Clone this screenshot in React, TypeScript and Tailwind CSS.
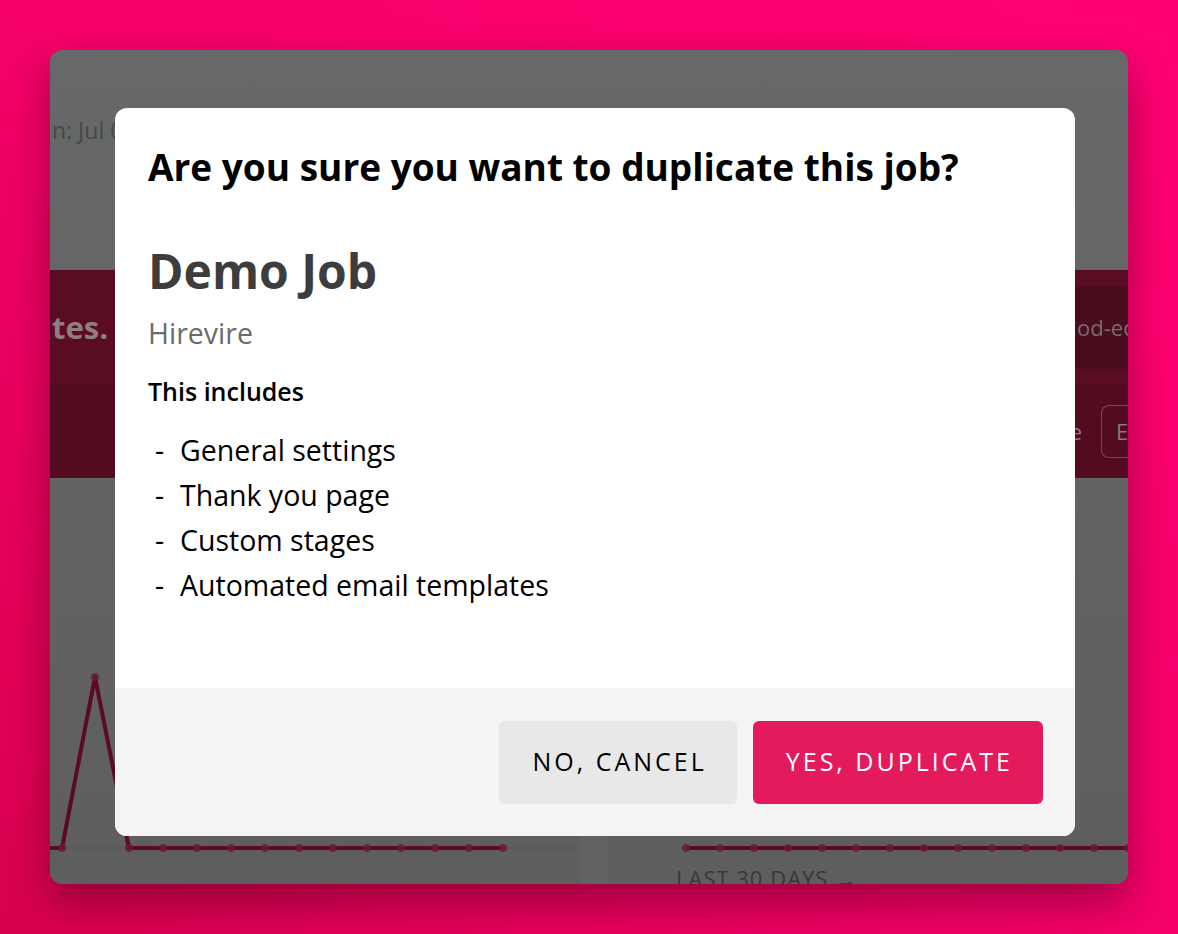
const leftDots = Array.from({ length: 12 }, (_, i) => 79 + i * 34);
const rightDots = Array.from({ length: 15 }, (_, i) => 0 + i * 34);

const includes = [
  "General settings",
  "Thank you page",
  "Custom stages",
  "Automated email templates",
];

function LeftChart() {
  return (
    <svg width="528" height="190" viewBox="0 0 528 190" className="block">
      <line x1="0" y1="178" x2="528" y2="178" stroke="#585859" strokeWidth="1.5" />
      <polyline
        points="0,178 12,178 45,7 79,178 453,178"
        fill="none"
        stroke="#5c0a22"
        strokeWidth="4"
        strokeLinejoin="round"
      />
      {[12, 45, ...leftDots].map((x) => (
        <circle key={x} cx={x} cy={x === 45 ? 7 : 178} r="4" fill="#6a1a2f" fillOpacity="0.8" />
      ))}
    </svg>
  );
}

function RightChart() {
  return (
    <svg width="518" height="190" viewBox="0 0 518 190" className="block">
      <line x1="76" y1="178" x2="518" y2="178" stroke="#5c0a22" strokeWidth="4" />
      {rightDots.map((x) => (
        <circle key={x} cx={76 + x} cy="178" r="4" fill="#6a1a2f" fillOpacity="0.8" />
      ))}
    </svg>
  );
}

export default function App() {
  return (
    <div className="h-[934px] w-full bg-linear-to-bl from-[#ff0072] via-[#f5006a] to-[#d8004e] px-[50px] pt-[50px] font-['Open_Sans',sans-serif]">
      <div className="relative h-[834px] overflow-hidden rounded-xl bg-linear-to-b from-[#676869] to-[#5e5e5e] shadow-[0_18px_40px_rgba(60,0,20,0.45)]">
        {/* dimmed page behind the dialog */}
        <div className="flex h-[220px] items-start pt-[63px]">
          <span className="whitespace-nowrap pl-[2px] text-[23px] text-[#474849]">n: Jul 01, 2021</span>
        </div>

        <div className="flex h-[115px] items-center bg-[#5a0c22]">
          <span className="w-[58px] text-right text-[31px] leading-none font-bold whitespace-nowrap text-[#8e7f84]">
            tes.
          </span>
          <div className="ml-auto flex h-[83px] w-[53px] items-center overflow-hidden bg-[#4a0d1c] pl-[2px]">
            <span className="text-[22px] whitespace-nowrap text-[#7a6a70]">od-editor</span>
          </div>
        </div>

        <div className="flex h-[93px] items-center justify-end gap-[19px] bg-[#520b1f]">
          <span className="text-[22px] text-[#8a7a80]">e</span>
          <div className="flex h-[53px] w-[27px] items-center overflow-hidden rounded-l-lg border-y border-l border-[#7a4a58] pl-[14px]">
            <span className="text-[22px] text-[#8a7a80]">E</span>
          </div>
        </div>

        <div className="h-[122px] border-b border-[#5f6061]" />

        <div className="flex">
          <div className="w-[528px] pt-[70px]">
            <LeftChart />
          </div>
          <div className="w-[32px] border-x border-[#5a5b5c] bg-[#616263]" />
          <div className="flex-1 pt-[70px]">
            <RightChart />
            <div className="pt-[2px] pl-[66px] text-[22px] tracking-[1px] whitespace-nowrap text-[#383838]">
              LAST 30 DAYS →
            </div>
          </div>
        </div>

        {/* dialog */}
        <div className="absolute top-[58px] left-[65px] w-[960px] overflow-hidden rounded-xl bg-white">
          <div className="h-[580px] px-[33px] pt-[34px]">
            <h2 className="text-[37px] leading-[50px] font-bold text-black">
              Are you sure you want to duplicate this job?
            </h2>
            <div className="mt-[50px] text-[48px] leading-[58px] font-bold text-[#3d3d3d]">Demo Job</div>
            <div className="mt-[14px] text-[28.5px] leading-[38px] text-[#6b6b6b]">Hirevire</div>
            <div className="mt-[23px] text-[25px] leading-[32px] font-semibold text-black">This includes</div>
            <ul className="mt-[21px]">
              {includes.map((item) => (
                <li key={item} className="flex text-[28.5px] leading-[45px] text-black">
                  <span className="w-[32px] pl-[7px]">-</span>
                  <span>{item}</span>
                </li>
              ))}
            </ul>
          </div>
          <div className="flex h-[148px] items-center justify-end gap-4 bg-[#f4f4f4] px-8">
            <button className="h-[83px] rounded-md bg-[#e8e8e8] pr-[30px] pl-[33px] text-[25px] tracking-[3px] text-black">
              NO, CANCEL
            </button>
            <button className="h-[83px] rounded-md bg-[#e31a5b] pr-[30px] pl-[33px] text-[25px] tracking-[3px] text-white">
              YES, DUPLICATE
            </button>
          </div>
        </div>
      </div>
    </div>
  );
}
